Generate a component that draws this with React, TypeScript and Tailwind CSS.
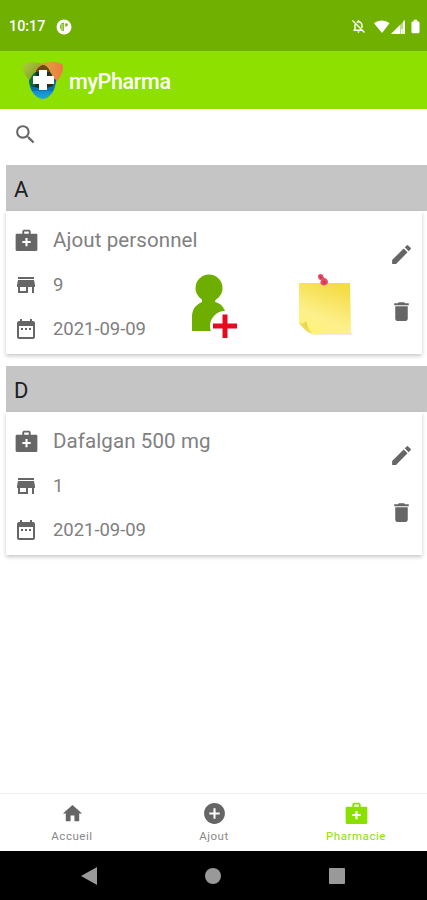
import type { ReactNode } from 'react';
import { MdAddCircle, MdDateRange, MdDelete, MdEdit, MdHome, MdSearch } from 'react-icons/md';

interface Medicine {
  name: string;
  quantity: number;
  date: string;
  personal?: boolean;
}

const SECTIONS: { letter: string; item: Medicine }[] = [
  {
    letter: 'A',
    item: { name: 'Ajout personnel', quantity: 9, date: '2021-09-09', personal: true },
  },
  {
    letter: 'D',
    item: { name: 'Dafalgan 500 mg', quantity: 1, date: '2021-09-09' },
  },
];

function MedkitIcon({ className }: { className?: string }) {
  return (
    <svg viewBox="0 0 22 22" className={className} fill="currentColor">
      <path
        fillRule="evenodd"
        d="M7 4.5V2L8.2.6h5.6L15 2v2.5h5.2c.7 0 1.2.4 1.2 1.1v14.3c0 .7-.5 1.1-1.2 1.1H1.8c-.7 0-1.2-.4-1.2-1.1V5.6c0-.7.5-1.1 1.2-1.1H7zm1.8 0h4.4V2.4H8.8v2.1zm1.2 4v3H7v2h3v3h2v-3h3v-2h-3v-3h-2z"
      />
    </svg>
  );
}

function StoreIcon({ className }: { className?: string }) {
  return (
    <svg viewBox="0 0 24 24" className={className} fill="currentColor">
      <path d="M20 4H4v2h16V4zm1 10v-2l-1-5H4l-1 5v2h1v6h10v-6h4v6h2v-6h1zm-9 4H6v-4h6v4z" />
    </svg>
  );
}

function Logo() {
  return (
    <svg viewBox="0 0 42 40" className="mt-px h-10 w-[42px]">
      <defs>
        <linearGradient id="logo-left" x1="0" y1="0" x2="1" y2="1">
          <stop offset="0" stopColor="#b4cc3c" />
          <stop offset="0.45" stopColor="#84a82c" />
          <stop offset="1" stopColor="#075f38" />
        </linearGradient>
        <linearGradient id="logo-right" x1="0" y1="0" x2="1" y2="0">
          <stop offset="0" stopColor="#b0a02c" />
          <stop offset="0.5" stopColor="#e09a40" />
          <stop offset="1" stopColor="#f17843" />
        </linearGradient>
        <linearGradient id="logo-bottom" x1="0" y1="0" x2="0" y2="1">
          <stop offset="0" stopColor="#064b60" />
          <stop offset="0.5" stopColor="#087fc4" />
          <stop offset="1" stopColor="#24a6dc" />
        </linearGradient>
      </defs>
      <path d="M2 3C8 0 20 1 26 6c6 6 2 18-5 23C13 26 1 15 1 7c0-2 0-3 1-4z" fill="url(#logo-left)" />
      <path d="M15 5c6-5 20-5 25-2 3 4-1 16-11 23-5 4-14-2-16-9-1-5-1-9 2-12z" fill="url(#logo-right)" />
      <path d="M7 19c7-6 20-6 27 0 0 9-6 19-13 19-8 0-14-10-14-19z" fill="url(#logo-bottom)" />
      <path d="M21 4c4 1 6 4 7 7 3 3 4 9 3 14-7 3-15 3-22 0-1-5 0-11 5-14 1-4 4-6 7-7z" fill="#0c3b24" />
      <path d="M14 11c-5 3-7 9-6 13l5 1z" fill="#12703a" />
      <path d="M21 4c4 1 6 4 7 7H14c1-4 4-6 7-7z" fill="#6c4a12" />
      <path d="M27 11c3 3 5 8 4 13l-4 1z" fill="#5a2510" />
      <path d="M8 25c8 3 17 3 25 0l-2 5H10z" fill="#0873b4" />
      <path d="M17 9h8v6h7v8h-7v6h-8v-6h-6v-8h6z" fill="#fff" />
    </svg>
  );
}

function StatusBar() {
  return (
    <div className="flex h-[51px] items-center bg-[#70b000] pl-[9px] pr-[7px] pt-[2px] text-white">
      <span className="text-[14.3px] font-medium">10:17</span>
      <svg viewBox="0 0 16 16" className="ml-[11px] h-4 w-4">
        <circle cx="8" cy="8" r="7.5" fill="#fff" />
        <path
          d="M7.8 3.6v8.6c-2.2-.2-3.8-2-3.8-4.3s1.6-4.1 3.8-4.3zM9.3 4.2h.8c2.2 0 2.2 3.2 0 3.2h-.8z"
          fill="#70b000"
        />
        <path d="M5.6 5h.8v6h-.8z" fill="#fff" />
      </svg>
      <svg viewBox="0 0 15 15" className="ml-auto h-[15px] w-[15px]" fill="none" stroke="#fff" strokeWidth="1.4">
        <path d="M1.5 1.5l12 12M4 5.3V11M2.5 11.2h8.7M5.8 3.3c2.7-1.4 5.2.4 5.2 3V9M7.5 1v2" />
        <path d="M6 12.5h3L7.5 14z" fill="#fff" stroke="none" />
      </svg>
      <svg viewBox="0 0 18 15" className="ml-[7px] h-[15px] w-[18px]" fill="#fff">
        <path d="M1 4.2C5.5.5 12 .5 16.5 4.2L9 14z" />
      </svg>
      <svg viewBox="0 0 14 14" className="h-[14px] w-[14px]" fill="#fff">
        <path d="M0 14L14 0v14z" opacity=".55" />
        <path d="M0 14l9-9v9zM12.2 1.8L14 0v14h-1.8zM10 9h1.5v5H10z" />
      </svg>
      <svg viewBox="0 0 10 15" className="ml-1.5 h-[15px] w-[9px]" fill="#fff">
        <path d="M3 0h4v2h1.5l1 1v11l-1 1h-7l-1-1V3l1-1H3z" />
      </svg>
    </div>
  );
}

function PersonAddPicture() {
  return (
    <svg viewBox="0 0 48 66" className="h-[66px] w-12">
      <circle cx="19" cy="15" r="13.5" fill="#6eae00" />
      <path d="M12 25h14l-1 4c5 1 8 4 10 9v20H2V44c0-7 3-12 10-15z" fill="#6eae00" />
      <circle cx="35" cy="53" r="15" fill="#fff" />
      <path d="M32.5 41.5h5v9H47v5h-9.5v9.5h-5v-9.5H23v-5h9.5z" fill="#e60a20" />
    </svg>
  );
}

function NotePicture() {
  return (
    <svg viewBox="0 0 56 64" className="h-16 w-14">
      <defs>
        <linearGradient id="note" x1="0.2" y1="1" x2="0.6" y2="0">
          <stop offset="0" stopColor="#fff475" />
          <stop offset="0.35" stopColor="#fdf08c" />
          <stop offset="1" stopColor="#f4dc44" />
        </linearGradient>
        <linearGradient id="note-fold" x1="0" y1="1" x2="1" y2="0">
          <stop offset="0" stopColor="#fff689" />
          <stop offset="1" stopColor="#d8bd25" />
        </linearGradient>
      </defs>
      <path d="M13 60h41v2H16z" fill="#ebebdf" />
      <path d="M1 10h51l1 51H14L1 50z" fill="url(#note)" />
      <path d="M1 50c4 1 6 0 7-2 1 4 3 10 7 13-5-1-10-5-14-11z" fill="url(#note-fold)" />
      <path d="M20 3c0-2 3-3 5-1l1 3c2 0 4 2 4 4 0 3-4 4-6 3-2-1-2-3-1-5-2 0-3-2-3-4z" fill="#e64a60" />
      <path d="M21 3l3 1-1 2zM25 8l3 1-2 2z" fill="#c2304a" />
    </svg>
  );
}

function Row({ icon, children }: { icon: ReactNode; children: ReactNode }) {
  return (
    <div className="flex items-center text-[#808080]">
      <span className="flex w-6 justify-center text-[#666]">{icon}</span>
      <span className="ml-[15px] whitespace-nowrap">{children}</span>
    </div>
  );
}

function MedicineCard({ item }: { item: Medicine }) {
  return (
    <div className="mr-[5px] flex h-[143px] bg-white shadow-[0_2px_4px_rgba(0,0,0,0.22)]">
      <div className="flex w-[184px] flex-col pl-2 pt-[7px]">
        <div className="flex h-[45px] items-center text-[20.5px] tracking-[0.1px]">
          <Row icon={<MedkitIcon className="mb-px h-[23px] w-[23px]" />}>{item.name}</Row>
        </div>
        <div className="flex h-[45px] items-center text-[18.5px]">
          <Row icon={<StoreIcon className="mb-[2px] h-6 w-6" />}>{item.quantity}</Row>
        </div>
        <div className="flex h-11 items-center text-[18.5px] tracking-[-0.05px]">
          <Row icon={<MdDateRange size={24} className="mb-[2px]" />}>{item.date}</Row>
        </div>
      </div>
      {item.personal && (
        <div className="flex items-start gap-[60px] pt-[62px]">
          <PersonAddPicture />
          <NotePicture />
        </div>
      )}
      <div className="ml-auto flex flex-col items-center gap-8 pr-2 pt-[31px] text-[#666]">
        <MdEdit size={25} />
        <MdDelete size={25} />
      </div>
    </div>
  );
}

function TabItem({ icon, label, active }: { icon: ReactNode; label: string; active?: boolean }) {
  return (
    <div className={`flex flex-1 flex-col items-center pt-[7px] ${active ? 'text-[#8ae000]' : 'text-[#666]'}`}>
      <span className="flex h-6 items-center">{icon}</span>
      <span className={`mt-[3px] text-[11.5px] leading-4 tracking-[0.55px] ${active ? '' : 'text-[#888]'}`}>
        {label}
      </span>
    </div>
  );
}

export default function App() {
  return (
    <div className="flex h-[900px] w-full flex-col overflow-hidden bg-white font-[Roboto,sans-serif]">
      <StatusBar />
      <header className="flex h-[58px] items-center bg-[#8ee000] pl-[22px] text-white">
        <Logo />
        <h1 className="ml-[5px] pt-1 text-[21.5px] font-medium tracking-[-0.35px]">myPharma</h1>
      </header>

      <div className="flex h-14 items-center pb-[5px] pl-[13px] text-[#666]">
        <MdSearch size={25} />
      </div>

      <main className="flex flex-1 flex-col gap-3 pl-1.5">
        {SECTIONS.map(({ letter, item }) => (
          <section key={letter}>
            <h2 className="flex h-[46px] items-center bg-[#c5c5c5] pl-2 pt-[3px] text-[22px] text-[#202020]">
              {letter}
            </h2>
            <MedicineCard item={item} />
          </section>
        ))}
      </main>

      <nav className="flex h-[58px] border-t border-[#eee] bg-white pl-px">
        <TabItem icon={<MdHome size={23} />} label="Accueil" />
        <TabItem icon={<MdAddCircle size={25} />} label="Ajout" />
        <TabItem icon={<MedkitIcon className="h-[23px] w-[23px]" />} label="Pharmacie" active />
      </nav>

      <div className="flex h-[49px] items-center justify-between bg-black pl-[81px] pr-[82px]">
        <svg viewBox="0 0 16 18" className="h-[18px] w-4" fill="#999">
          <path d="M16 0v18L0 9z" />
        </svg>
        <span className="h-4 w-4 rounded-full bg-[#999]" />
        <span className="h-4 w-4 rounded-[1px] bg-[#999]" />
      </div>
    </div>
  );
}
